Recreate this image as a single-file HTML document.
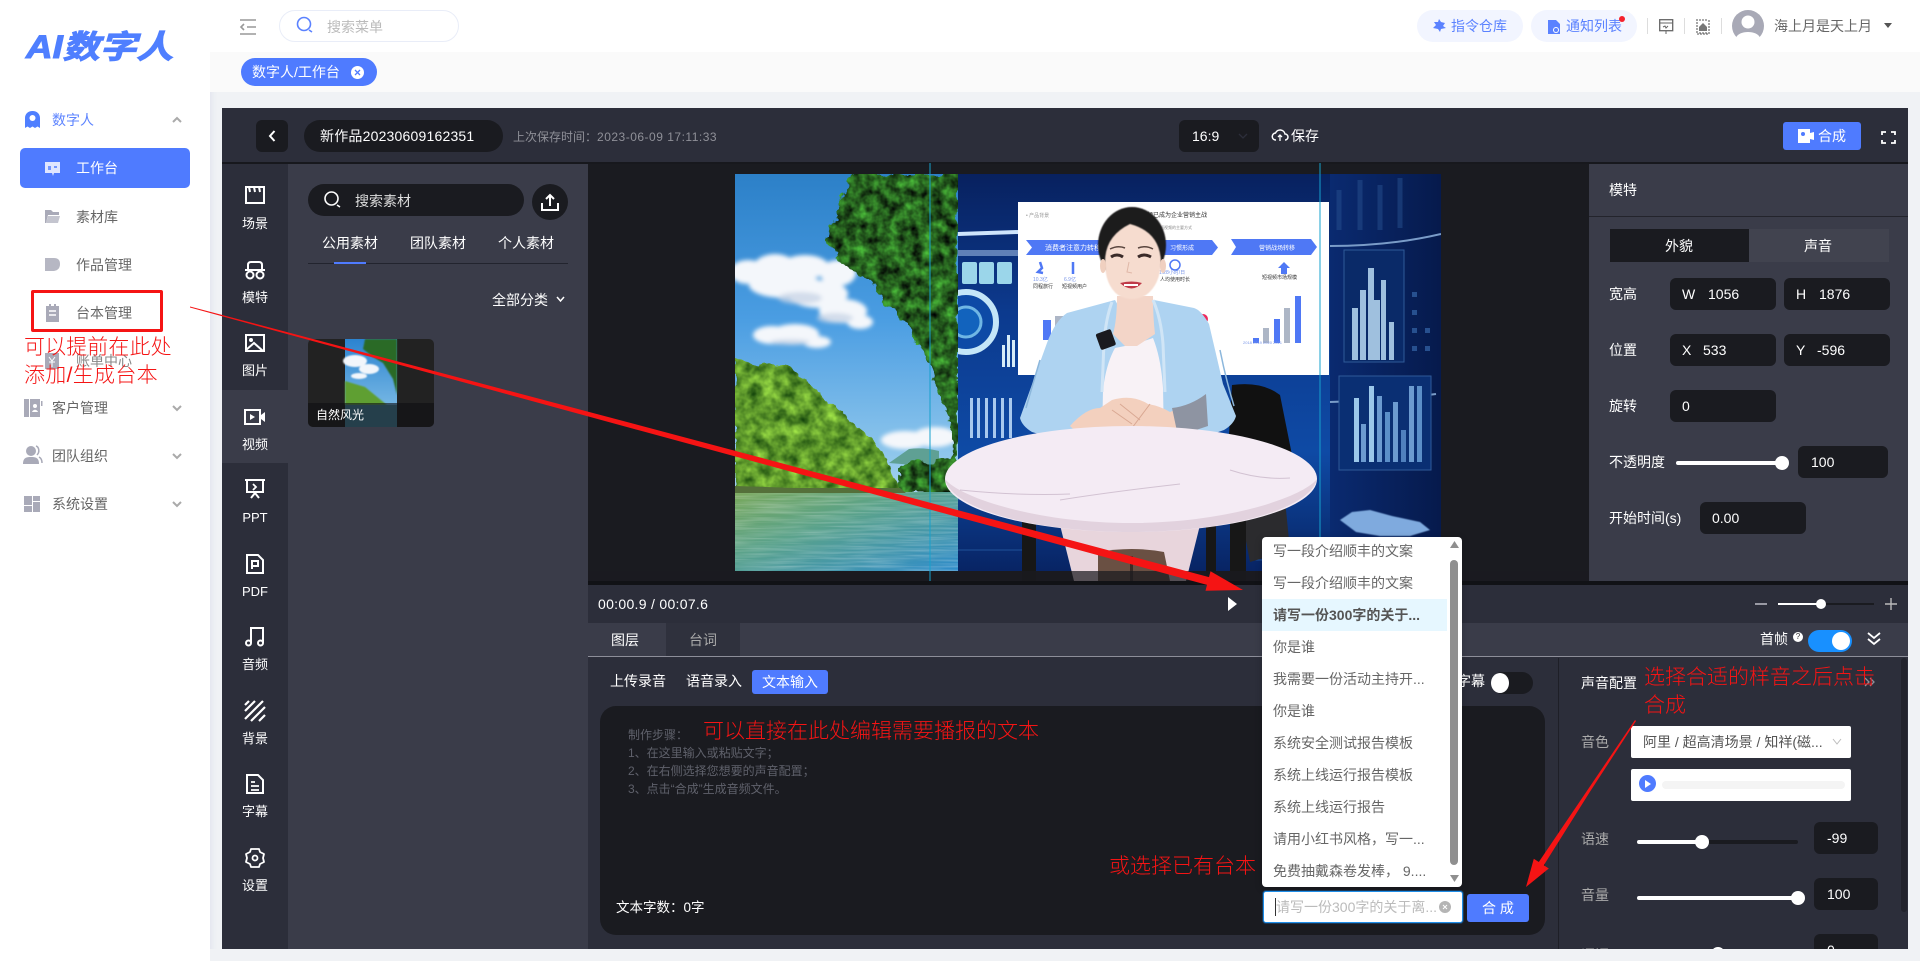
<!DOCTYPE html>
<html lang="zh"><head><meta charset="utf-8"><title>AI数字人</title>
<style>
html,body{margin:0;padding:0}
body{width:1920px;height:961px;overflow:hidden;position:relative;background:#f0f2f5;font-family:"Liberation Sans","Noto Sans CJK SC",sans-serif;font-size:14px;color:#fff}
.t{position:absolute;white-space:nowrap;line-height:20px}
.b{position:absolute;box-sizing:border-box}
.k{background:#1a1b20;border-radius:6px}
svg{position:absolute;overflow:visible}
.g{color:#666}
.r{position:absolute;white-space:nowrap;color:#f51414;font-size:21px;line-height:30px;font-weight:300;font-family:"Liberation Sans","Noto Sans CJK SC",sans-serif}
.l{width:66px;text-align:center;left:222px;font-size:13px}
.dd{left:1273px;color:#666}
.knob{position:absolute;background:#fff;border-radius:50%}
</style></head><body>

<!-- sidebar -->
<div class="b" style="left:0;top:0;width:210px;height:961px;background:#fff;box-shadow:2px 0 6px rgba(60,80,160,.08)"></div>
<div class="t" style="left:26px;top:27px;line-height:40px;font-size:32px;font-weight:700;font-style:italic;color:#4f7fff;-webkit-text-stroke:1px #4f7fff;transform:scaleX(1.15);transform-origin:0 50%">AI数字人</div>

<svg style="left:24px;top:110px" width="17" height="20" viewBox="0 0 17 20"><path d="M8.5 1C4 1 1 4 1 8v10l2.5-1.5L6 18l2.5-1.5L11 18l2.5-1.5L16 18V8c0-4-3-7-7.5-7z" fill="#4f7fff"/><circle cx="8.5" cy="8" r="3" fill="#fff"/></svg>
<div class="t" style="left:52px;top:110px;color:#5d84ff">数字人</div>
<svg style="left:172px;top:116px" width="10" height="8"><path d="M1 6l4-4 4 4" fill="none" stroke="#aaa" stroke-width="2"/></svg>

<div class="b" style="left:20px;top:148px;width:170px;height:40px;background:#4f7bff;border-radius:5px"></div>
<svg style="left:45px;top:161px" width="15" height="15"><path d="M0 1h15v11H9l-1 3-1-3H0z" fill="#dfe6ff"/><path d="M3 6h3M9 6h3M3 8h3" stroke="#4f7bff" stroke-width="1.5"/></svg>
<div class="t" style="left:76px;top:158px">工作台</div>

<svg style="left:45px;top:209px" width="15" height="15"><path d="M0 1h6l2 2h6v3H3L1 14H0z" fill="#a9aab8"/><path d="M3 7h12l-2 7H1z" fill="#c4c5cf"/></svg>
<div class="t g" style="left:76px;top:207px">素材库</div>
<svg style="left:45px;top:257px" width="15" height="15"><path d="M0 1h9q6 0 6 6t-6 7H0z" fill="#b6b7c3"/></svg>
<div class="t g" style="left:76px;top:255px">作品管理</div>
<svg style="left:46px;top:304px" width="13" height="18"><path d="M0 2h3V0h2v2h3V0h2v2h3v16H0z" fill="#a9aab8"/><path d="M3 7h7M3 11h7" stroke="#fff" stroke-width="1.5"/></svg>
<div class="t g" style="left:76px;top:303px">台本管理</div>
<svg style="left:45px;top:353px" width="14" height="16"><rect width="14" height="16" fill="#a9aab8"/><path d="M4 4l3 4 3-4M4 9h6M7 8v6" stroke="#fff" fill="none"/></svg>
<div class="t" style="left:76px;top:351px;color:#888">账单中心</div>

<svg style="left:24px;top:399px" width="18" height="18"><rect x="0" y="0" width="5" height="18" fill="#a9aab8"/><rect x="6" y="0" width="10" height="18" fill="#a9aab8"/><rect x="17" y="2" width="1.5" height="5" fill="#a9aab8"/><circle cx="11" cy="7" r="2" fill="#fff"/><path d="M8 13c1-3 5-3 6 0z" fill="#fff"/></svg>
<div class="t g" style="left:52px;top:398px">客户管理</div>
<svg style="left:172px;top:404px" width="10" height="8"><path d="M1 2l4 4 4-4" fill="none" stroke="#aaa" stroke-width="2"/></svg>

<svg style="left:23px;top:446px" width="19" height="18"><circle cx="8" cy="5" r="5" fill="#a9aab8"/><path d="M0 18c0-6 3-7 8-7s8 1 8 7z" fill="#a9aab8"/><path d="M13 0c3 1 4 6 1 9M16 11c2 1 3 3 3 6" stroke="#a9aab8" fill="none" stroke-width="1.5"/></svg>
<div class="t g" style="left:52px;top:446px">团队组织</div>
<svg style="left:172px;top:452px" width="10" height="8"><path d="M1 2l4 4 4-4" fill="none" stroke="#aaa" stroke-width="2"/></svg>

<svg style="left:24px;top:496px" width="16" height="16"><rect width="8" height="9" fill="#a9aab8"/><rect x="9" width="7" height="5" fill="#a9aab8"/><rect y="10" width="8" height="6" fill="#a9aab8"/><rect x="9" y="6" width="7" height="10" fill="#a9aab8"/></svg>
<div class="t g" style="left:52px;top:494px">系统设置</div>
<svg style="left:172px;top:500px" width="10" height="8"><path d="M1 2l4 4 4-4" fill="none" stroke="#aaa" stroke-width="2"/></svg>

<!-- top bar -->
<div class="b" style="left:210px;top:0;width:1710px;height:52px;background:#fff"></div>
<div class="b" style="left:210px;top:52px;width:1710px;height:40px;background:#fafafa"></div>
<svg style="left:240px;top:19px" width="16" height="16"><path d="M0 1h16M7 8h9M0 15h16M4 5L1 8l3 3" fill="none" stroke="#999" stroke-width="1.6"/></svg>
<div class="b" style="left:279px;top:10px;width:180px;height:32px;border:1px solid #e9edf8;border-radius:16px"></div>
<svg style="left:296px;top:16px" width="18" height="18"><circle cx="8" cy="8" r="6.500" fill="none" stroke="#5b82ff" stroke-width="1.6"/><path d="M13 14l3 2" stroke="#5b82ff" stroke-width="1.6"/></svg>
<div class="t" style="left:327px;top:17px;color:#bbb">搜索菜单</div>

<div class="b" style="left:241px;top:58px;width:136px;height:28px;background:#4f7bff;border-radius:14px"></div>
<div class="t" style="left:252px;top:62px">数字人/工作台</div>
<div class="b" style="left:351px;top:66px;width:13px;height:13px;border-radius:50%;background:#fff"></div>
<svg style="left:354px;top:69px" width="7" height="7"><path d="M1 1l5 5M6 1L1 6" stroke="#4f7bff" stroke-width="1.3"/></svg>

<div class="b" style="left:1417px;top:10px;width:106px;height:32px;background:#f2f5ff;border-radius:16px"></div>
<svg style="left:1433px;top:19px" width="13" height="14"><path d="M6 0l2 3 4 1-2 3 3 2-5 1-1 3-2-3-5-1 3-3-2-3 4 0z" fill="#5b82ff"/></svg>
<div class="t" style="left:1451px;top:16px;color:#5b82ff">指令仓库</div>
<div class="b" style="left:1531px;top:10px;width:106px;height:32px;background:#f2f5ff;border-radius:16px"></div>
<svg style="left:1548px;top:20px" width="13" height="14"><path d="M0 0h8l4 4v10H0z" fill="#5b82ff"/><circle cx="8" cy="10" r="3" fill="#fff"/><circle cx="8" cy="10" r="2" fill="#5b82ff"/></svg>
<div class="t" style="left:1566px;top:16px;color:#5b82ff">通知列表</div>
<div class="b" style="left:1619px;top:16px;width:6px;height:6px;border-radius:50%;background:#f5222d"></div>
<div class="b" style="left:1647px;top:18px;width:1px;height:16px;background:#ddd"></div>
<div class="b" style="left:1684px;top:18px;width:1px;height:16px;background:#ddd"></div>
<div class="b" style="left:1721px;top:18px;width:1px;height:16px;background:#ddd"></div>
<svg style="left:1659px;top:19px" width="15" height="15"><rect x=".7" y=".7" width="13" height="11" fill="none" stroke="#666" stroke-width="1.3"/><path d="M1 4h13M4 8l2-1 1 2 2-2M7 12v3" fill="none" stroke="#666"/></svg>
<svg style="left:1696px;top:19px" width="14" height="15"><path d="M1 0v15h12V0" fill="none" stroke="#777" stroke-width="1.3" stroke-dasharray="2 1"/><path d="M3 1h8M3 14h8" stroke="#777" stroke-width="1.3" stroke-dasharray="2 1"/><path d="M7 4l4 4v4H3V8z" fill="#777"/></svg>
<svg style="left:1732px;top:10px" width="32" height="32"><circle cx="16" cy="16" r="16" fill="#a8a9b6"/><circle cx="16" cy="12" r="6.500" fill="#fff"/><path d="M4 28c2-8 22-8 24 0a16 16 0 0 1-24 0z" fill="#fff"/></svg>
<div class="t" style="left:1774px;top:16px;color:#666">海上月是天上月</div>
<svg style="left:1884px;top:23px" width="8" height="6"><path d="M0 0h8L4 5z" fill="#555"/></svg>

<!-- editor -->
<div class="b" style="left:222px;top:108px;width:1686px;height:841px;background:#2c2e3a;overflow:hidden"></div>
<div class="b" style="left:222px;top:162px;width:1686px;height:2px;background:#17181d"></div>
<div class="b k" style="left:256px;top:120px;width:32px;height:32px"></div>
<svg style="left:268px;top:130px" width="8" height="12"><path d="M6.500 1L2 6l4.500 5" fill="none" stroke="#fff" stroke-width="2"/></svg>
<div class="b" style="left:304px;top:120px;width:199px;height:32px;background:#1a1b20;border-radius:16px"></div>
<div class="t" style="left:320px;top:126px;letter-spacing:.2px">新作品20230609162351</div>
<div class="t" style="left:513px;top:127px;font-size:12px;color:#8f9098">上次保存时间：<span style="letter-spacing:.5px">2023-06-09 17:11:33</span></div>
<div class="b k" style="left:1179px;top:120px;width:80px;height:32px"></div>
<div class="t" style="left:1192px;top:126px">16:9</div>
<svg style="left:1238px;top:133px" width="10" height="7"><path d="M1 1l4 4 4-4" fill="none" stroke="#2c2e3a" stroke-width="1.300"/></svg>
<svg style="left:1272px;top:128px" width="16" height="14"><path d="M4 12a3.500 3.500 0 0 1-.5-7A5 5 0 0 1 13 6a3 3 0 0 1 0 6" fill="none" stroke="#fff" stroke-width="1.500"/><path d="M8 13V7M6 9l2-2 2 2" fill="none" stroke="#fff" stroke-width="1.300"/></svg>
<div class="t" style="left:1291px;top:126px">保存</div>
<div class="b" style="left:1783px;top:122px;width:78px;height:28px;background:#4f7bff;border-radius:3px"></div>
<svg style="left:1798px;top:129px" width="16" height="14"><path d="M0 0h12v4l4-1v8l-4-1v4H0z" fill="#fff"/><circle cx="5" cy="5" r="2" fill="#4f7bff"/></svg>
<div class="t" style="left:1818px;top:126px">合成</div>
<svg style="left:1881px;top:131px" width="15" height="13"><path d="M1 4V1h4M10 1h4v3M14 9v3h-4M5 12H1V9" fill="none" stroke="#fff" stroke-width="1.800"/></svg>

<!-- left rail -->
<div class="b" style="left:222px;top:390px;width:66px;height:73px;background:#3a3c49"></div>
<div class="b" style="left:288px;top:164px;width:300px;height:785px;background:#3a3c49"></div>
<svg style="left:245px;top:186px" width="20" height="18"><path d="M1 1h18v16H1z" fill="none" stroke="#fff" stroke-width="2"/><path d="M4 1l1 5M9 1l1 5M14 1l1 5" stroke="#fff" stroke-width="2"/></svg>
<div class="t l" style="top:214px">场景</div>
<svg style="left:245px;top:261px" width="20" height="19"><path d="M3 8V4q0-3 3-3h8q3 0 3 3v4M0 9h20" fill="none" stroke="#fff" stroke-width="2"/><circle cx="5" cy="14" r="3.500" fill="none" stroke="#fff" stroke-width="2"/><circle cx="15" cy="14" r="3.500" fill="none" stroke="#fff" stroke-width="2"/></svg>
<div class="t l" style="top:288px">模特</div>
<svg style="left:245px;top:334px" width="20" height="18"><rect x="1" y="1" width="18" height="16" fill="none" stroke="#fff" stroke-width="2"/><circle cx="6" cy="6" r="2" fill="#fff"/><path d="M1 16l8-7 9 8" fill="none" stroke="#fff" stroke-width="2"/></svg>
<div class="t l" style="top:361px">图片</div>
<svg style="left:244px;top:409px" width="22" height="16"><rect x="1" y="1" width="15" height="14" fill="none" stroke="#fff" stroke-width="2"/><path d="M6 5l5 3-5 3z" fill="#fff"/><path d="M17 6l4-3v10l-4-3z" fill="#fff"/></svg>
<div class="t l" style="top:435px">视频</div>
<svg style="left:245px;top:479px" width="20" height="20"><path d="M0 1h20M2 1v12h16V1" fill="none" stroke="#fff" stroke-width="2"/><path d="M8 5l3 3-3 3" fill="none" stroke="#fff" stroke-width="1.800"/><path d="M6 19l4-5 4 5" fill="none" stroke="#fff" stroke-width="2"/></svg>
<div class="t l" style="top:508px">PPT</div>
<svg style="left:246px;top:554px" width="18" height="20"><path d="M1 1h11l5 5v13H1z" fill="none" stroke="#fff" stroke-width="2"/><path d="M6 15V7h6v5H6" fill="none" stroke="#fff" stroke-width="2"/></svg>
<div class="t l" style="top:582px">PDF</div>
<svg style="left:245px;top:627px" width="20" height="20"><path d="M6 16V1h12v15" fill="none" stroke="#fff" stroke-width="2"/><circle cx="3.500" cy="16" r="2.500" fill="none" stroke="#fff" stroke-width="2"/><circle cx="15.500" cy="16" r="2.500" fill="none" stroke="#fff" stroke-width="2"/></svg>
<div class="t l" style="top:655px">音频</div>
<svg style="left:245px;top:701px" width="20" height="20"><path d="M0 10L10 0M0 18L18 0M6 20L20 6M14 20l6-6M0 4l4-4" stroke="#fff" stroke-width="2.200"/></svg>
<div class="t l" style="top:729px">背景</div>
<svg style="left:246px;top:774px" width="18" height="20"><path d="M1 1h11l5 5v13H1z" fill="none" stroke="#fff" stroke-width="2"/><path d="M5 8h4M5 12h8M5 16h8" stroke="#fff" stroke-width="1.800"/></svg>
<div class="t l" style="top:802px">字幕</div>
<svg style="left:245px;top:848px" width="20" height="20"><path d="M6 1h8l1 3 4 2-1 4 1 4-4 2-1 3H6l-1-3-4-2 1-4-1-4 4-2z" fill="none" stroke="#fff" stroke-width="1.800" stroke-linejoin="round"/><circle cx="10" cy="10" r="2.500" fill="none" stroke="#fff" stroke-width="1.800"/></svg>
<div class="t l" style="top:876px">设置</div>

<!-- material panel -->
<div class="b" style="left:308px;top:184px;width:216px;height:32px;background:#1a1b20;border-radius:16px"></div>
<svg style="left:324px;top:191px" width="18" height="18"><circle cx="7.500" cy="7.500" r="6.500" fill="none" stroke="#fff" stroke-width="1.600"/><path d="M13 14l3 2" stroke="#fff" stroke-width="1.600"/></svg>
<div class="t" style="left:355px;top:191px;color:#ddd">搜索素材</div>
<div class="b" style="left:532px;top:184px;width:36px;height:36px;background:#1a1b20;border-radius:50%"></div>
<svg style="left:541px;top:193px" width="18" height="18"><path d="M1 10v7h16v-7M9 13V2M5 6l4-4 4 4" fill="none" stroke="#fff" stroke-width="2"/></svg>
<div class="t" style="left:322px;top:233px">公用素材</div>
<div class="t" style="left:410px;top:233px">团队素材</div>
<div class="t" style="left:498px;top:233px">个人素材</div>
<div class="b" style="left:308px;top:263px;width:260px;height:1px;background:#22242e"></div>
<div class="b" style="left:334px;top:262px;width:32px;height:2px;background:#4f7bff"></div>
<div class="t" style="left:492px;top:290px">全部分类</div>
<svg style="left:557px;top:297px" width="7" height="5"><path d="M0 0l3.500 4L7 0" fill="none" stroke="#fff" stroke-width="1.500"/></svg>
<div class="b" style="left:308px;top:339px;width:126px;height:88px;background:#222;border-radius:5px;overflow:hidden">
<svg style="left:37px;top:0" width="52" height="88" viewBox="0 0 52 88"><defs><linearGradient id="ts" x1="0" y1="0" x2="0" y2="1"><stop offset="0" stop-color="#2b83d0"/><stop offset="1" stop-color="#8dc7ea"/></linearGradient><filter id="tb"><feGaussianBlur stdDeviation=".8"/></filter></defs><rect width="52" height="88" fill="url(#ts)"/><g filter="url(#tb)"><ellipse cx="10" cy="22" rx="12" ry="6" fill="#f2f6fb"/><ellipse cx="24" cy="30" rx="10" ry="5" fill="#f2f6fb"/><ellipse cx="14" cy="37" rx="8" ry="3" fill="#f2f6fb"/><path d="M20 0h32v56l-4-16-10-16-10-6-10-8z" fill="#2a6a26"/><path d="M0 42l20 6 22 18H0z" fill="#5f9f30"/></g><rect y="66" width="52" height="22" fill="#4a8fa8"/></svg>
<div class="b" style="left:0;top:64px;width:126px;height:24px;background:rgba(15,15,18,.62)"></div>
<div class="t" style="left:8px;top:66px;font-size:12px">自然风光</div>
</div>

<!-- canvas -->
<div class="b" style="left:588px;top:164px;width:1001px;height:417px;background:#1a1b20"></div>
<svg style="left:588px;top:163px" width="1001" height="418" viewBox="588 163 1001 418">
<defs>
<linearGradient id="sky" x1="0" y1="0" x2="0" y2="1"><stop offset="0" stop-color="#2c80c8"/><stop offset=".45" stop-color="#4a9de2"/><stop offset="1" stop-color="#a2d2ef"/></linearGradient>
<linearGradient id="wat" x1="0" y1="0" x2="1" y2="1"><stop offset="0" stop-color="#79a85a"/><stop offset=".4" stop-color="#5aa28a"/><stop offset="1" stop-color="#2f8ccb"/></linearGradient>
<linearGradient id="bg" x1="0" y1="0" x2="0" y2="1"><stop offset="0" stop-color="#08215f"/><stop offset=".35" stop-color="#0c3a8e"/><stop offset=".7" stop-color="#0e4aa5"/><stop offset="1" stop-color="#082464"/></linearGradient>
<linearGradient id="rbg" x1="0" y1="0" x2="1" y2="0"><stop offset="0" stop-color="#0a2a70"/><stop offset="1" stop-color="#061a4c"/></linearGradient>
<filter id="hill" x="0" y="0" width="100%" height="100%" color-interpolation-filters="sRGB"><feTurbulence type="fractalNoise" baseFrequency=".08" numOctaves="3" seed="7" result="n"/><feDisplacementMap in="SourceGraphic" in2="n" scale="10" xChannelSelector="R" yChannelSelector="G" result="d"/><feColorMatrix in="n" values=".7 0 0 0 .02  .8 0 0 0 .2  .3 0 0 0 .02  0 0 0 0 1"/><feComposite in2="d" operator="in"/></filter>
<filter id="tree" x="0" y="0" width="100%" height="100%" color-interpolation-filters="sRGB"><feTurbulence type="fractalNoise" baseFrequency=".09" numOctaves="3" seed="3" result="n"/><feDisplacementMap in="SourceGraphic" in2="n" scale="14" xChannelSelector="R" yChannelSelector="G" result="d"/><feColorMatrix in="n" values=".4 0 0 0 -.05  1 0 0 0 -.12  .3 0 0 0 -.03  0 0 0 0 1"/><feComposite in2="d" operator="in"/></filter>
<filter id="rip" x="0" y="0" width="100%" height="100%" color-interpolation-filters="sRGB"><feTurbulence type="fractalNoise" baseFrequency=".02 .5" numOctaves="2" seed="5"/><feColorMatrix values="0 0 0 0 1  0 0 0 0 1  0 0 0 0 1  .5 0 0 0 -.17"/><feComposite in2="SourceGraphic" operator="in"/></filter>
<filter id="bl"><feGaussianBlur stdDeviation="2"/></filter>
<filter id="bl1"><feGaussianBlur stdDeviation=".6"/></filter>
<clipPath id="cp1"><rect x="735" y="174" width="223" height="397"/></clipPath>
<clipPath id="cp2"><rect x="958" y="174" width="483" height="397"/></clipPath>
<clipPath id="cp3"><rect x="1018" y="202" width="311" height="173"/></clipPath>
</defs>
<!-- nature -->
<g clip-path="url(#cp1)">
<rect x="735" y="174" width="223" height="320" fill="url(#sky)"/>
<g filter="url(#bl)">
<g fill="#f4f7fb">
<ellipse cx="748" cy="272" rx="18" ry="12"/><ellipse cx="775" cy="268" rx="22" ry="14"/><ellipse cx="805" cy="267" rx="24" ry="12"/><ellipse cx="838" cy="273" rx="18" ry="13"/>
<ellipse cx="785" cy="285" rx="36" ry="13"/><ellipse cx="818" cy="294" rx="30" ry="14"/><ellipse cx="843" cy="311" rx="24" ry="12"/><ellipse cx="860" cy="322" rx="13" ry="7"/>
<ellipse cx="772" cy="335" rx="19" ry="9"/><ellipse cx="795" cy="334" rx="24" ry="10"/><ellipse cx="817" cy="342" rx="14" ry="6"/>
<ellipse cx="905" cy="440" rx="24" ry="9"/><ellipse cx="935" cy="437" rx="22" ry="10"/>
</g>
<g fill="#c9d5e6" opacity=".75"><ellipse cx="800" cy="298" rx="22" ry="6"/><ellipse cx="835" cy="318" rx="18" ry="5"/><ellipse cx="790" cy="342" rx="20" ry="3"/></g>
</g>
<path d="M889 463l20-14q14-2 30 2v16z" fill="#5fa094"/>
<path d="M735 357l10 4 12 6q8-8 20 0 12-4 24 12 12 6 24 22 12 6 26 20 12 10 20 16 12 14 20 34 6 10 10 21v3H735z" fill="#000" filter="url(#hill)"/>
<path d="M898 468q16-8 32-6l28-4v36H900z" fill="#000" filter="url(#tree)"/>
<path d="M852 174h106v330l-8-24q2-20 2-48-6-24-17-50l-10-30-20-30-20-22-15-18-20-12-25-30q8-16 13-30z" fill="#000" filter="url(#tree)"/>
<rect x="735" y="492" width="223" height="79" fill="url(#wat)"/>
<rect x="735" y="492" width="223" height="79" fill="#000" filter="url(#rip)"/>
<path d="M735 486l60 2h105l6 5H735z" fill="#55703a"/>
</g>
<!-- scene -->
<g clip-path="url(#cp2)">
<rect x="958" y="174" width="483" height="397" fill="url(#bg)"/>
<rect x="1330" y="174" width="111" height="397" fill="url(#rbg)"/>
<path d="M958 232l60-2v4l-60 2z" fill="#cfe5fb"/>
<path d="M958 256h60v-6h-60z" fill="#9ab8e0" opacity=".6"/>
<g fill="#9bd6ea"><rect x="962" y="262" width="15" height="22" rx="2"/><rect x="979" y="262" width="15" height="22" rx="2"/><rect x="997" y="262" width="15" height="22" rx="2"/></g>
<circle cx="966" cy="322" r="30" fill="#0d4aa6" stroke="#c4e6f8" stroke-width="6"/>
<circle cx="966" cy="322" r="15" fill="#1263bd" stroke="#6fb6e4" stroke-width="3"/>
<g fill="#d7ecf8"><rect x="1002" y="345" width="3" height="22"/><rect x="1007" y="335" width="3" height="32"/><rect x="1012" y="340" width="3" height="27"/></g>
<g fill="#a8c9ee"><rect x="970" y="398" width="3" height="40"/><rect x="977" y="398" width="3" height="40"/><rect x="985" y="398" width="3" height="40"/><rect x="993" y="398" width="3" height="40"/><rect x="1001" y="398" width="3" height="40"/><rect x="1009" y="398" width="3" height="40"/></g>
<path d="M1330 402q60-2 106-8M1330 246q60 0 111-12" stroke="#7a9cc8" stroke-width="2" fill="none"/>
<!-- right charts -->
<rect x="1344" y="250" width="60" height="112" fill="#0a2a68" stroke="#2f5a98"/>
<g fill="#9fc0de">
<rect x="1352" y="308" width="6" height="52"/><rect x="1360" y="290" width="6" height="70"/><rect x="1368" y="268" width="6" height="92"/><rect x="1374" y="300" width="6" height="60"/><rect x="1381" y="280" width="5" height="80"/><rect x="1389" y="322" width="5" height="38"/></g>
<g fill="#27508f"><rect x="1412" y="292" width="5" height="5"/><rect x="1412" y="310" width="5" height="5"/><rect x="1412" y="328" width="5" height="5"/><rect x="1412" y="346" width="5" height="5"/><rect x="1425" y="328" width="5" height="5"/><rect x="1425" y="346" width="5" height="5"/></g>
<rect x="1339" y="376" width="92" height="94" fill="#0a2f73" stroke="#2f5a98"/>
<g>
<rect x="1354" y="398" width="5" height="64" fill="#9cc8ea"/><rect x="1361" y="424" width="5" height="38" fill="#6c9bd0"/><rect x="1369" y="386" width="5" height="76" fill="#9cc8ea"/><rect x="1377" y="396" width="5" height="66" fill="#6c9bd0"/><rect x="1385" y="412" width="5" height="50" fill="#5b8fc8"/><rect x="1393" y="402" width="5" height="60" fill="#6c9bd0"/><rect x="1401" y="430" width="5" height="32" fill="#5080bd"/><rect x="1409" y="386" width="5" height="76" fill="#6c9bd0"/><rect x="1417" y="386" width="5" height="76" fill="#5b8fc8"/></g>
<path d="M1339 190v40M1360 180v50M1380 185v45M1400 178v50" stroke="#27508f" stroke-width="5" opacity=".5"/>
<path d="M1340 520l12-8 18-2 22 6 28 6 10 8-20 6-30 0-24-4z" fill="#7faade" filter="url(#bl1)"/>
<g stroke="#2e6ab4" fill="none" opacity=".6"><path d="M958 500q30-20 60-10M958 550h70M1250 560h190"/></g>
</g>
<!-- slide -->
<rect x="1018" y="202" width="311" height="173" fill="#fff"/>
<g clip-path="url(#cp3)">
<g fill="#4f78f5">
<path d="M1026 240h100v15h-100l6-7.500z"/><path d="M1150 240h62l6 7.500-6 7.500h-62z"/><path d="M1231 239h80l6 8-6 8h-80l5-8z"/>
<rect x="1043" y="320" width="8" height="20"/><rect x="1253" y="338" width="6" height="5"/><rect x="1274" y="319" width="6" height="24"/><rect x="1295" y="296" width="6" height="47"/></g>
<g fill="#adb6c6"><rect x="1055" y="316" width="8" height="24"/><rect x="1263" y="328" width="6" height="15"/><rect x="1284" y="308" width="6" height="35"/></g>
<text x="1045" y="250" font-size="7" fill="#fff">消费者注意力转移</text>
<text x="1170" y="250" font-size="6" fill="#fff">习惯形成</text>
<text x="1147" y="217" font-size="6" fill="#333">频已成为企业营销主战</text>
<text x="1160" y="229" font-size="4" fill="#888">短视频的主要方式</text>
<text x="1026" y="217" font-size="5" fill="#999">• 产品背景</text>
<text x="1259" y="250" font-size="6" fill="#fff">营销战场转移</text>
<path d="M1040 262l2 6-4 4 5 1M1073 262v12" stroke="#4f78f5" stroke-width="2.500" fill="none"/>
<circle cx="1175" cy="265" r="5" fill="none" stroke="#4f78f5" stroke-width="1.500"/>
<text x="1033" y="281" font-size="5" fill="#7a96e8">10.3亿</text><text x="1064" y="281" font-size="5" fill="#7a96e8">6.9亿</text>
<text x="1033" y="288" font-size="5" fill="#333">同程旅行</text><text x="1062" y="288" font-size="5" fill="#333">短视频用户</text>
<text x="1159" y="274" font-size="5" fill="#7a96e8">1.28小时/日</text><text x="1160" y="281" font-size="5" fill="#333">人均使用时长</text>
<text x="1262" y="279" font-size="5" fill="#333">短视频市场规模</text>
<text x="1243" y="344" font-size="4" fill="#7a96e8">2018 2019 2020 2021</text>
<circle cx="1203" cy="319" r="5" fill="#ee2a5c"/>
<path d="M1284 262l6 6h-3v6h-6v-6h-3z" fill="#4f78f5"/>
</g>
<!-- chair + legs -->
<path d="M1232 385q30-4 48 10l16 80-30 40-40-30z" fill="#111"/>
<path d="M1240 510q20-24 44-20l6 60-40 12z" fill="#2b2b2e"/>
<rect x="1022" y="510" width="14" height="71" fill="#171717"/>
<rect x="1206" y="510" width="10" height="71" fill="#171717"/>
<rect x="1230" y="510" width="16" height="71" fill="#171717"/>
<path d="M1060 525h140l-14 56h-112z" fill="#e8d5dc"/>
<path d="M1098 552q34-6 66 0l6 29h-72z" fill="#6a5043"/>
<path d="M1130 556h3v25h-3z" fill="#3b2c26"/>
<!-- body -->
<path d="M1115 300L1067 313q-12 8-20 30l-17 47-10 28q2 8 12 14l48 14h98l46-16q10-6 12-14l-13-32-14-60q-8-14-15-16l-40-8-22 30z" fill="#aed3f1"/>
<path d="M1040 360q-6 20-14 48M1220 350q6 30 14 56" stroke="#8cb7dc" stroke-width="1.500" fill="none"/>
<path d="M1102 440l1-50q3-26 12-42l20-4 18-6q8 20 10 50l1 52z" fill="#f8f2f6"/>
<path d="M1117 296q0 24-4 38l12 12h12l18-12q-2-16-2-38z" fill="#f3d5c8"/>
<path d="M1112 302q-6 16-8 40l-2 50M1153 300q8 18 10 44l2 48" stroke="#d0e5f6" stroke-width="3" fill="none"/>
<path d="M1070 426q16-18 30-18l12-8q20-6 36 4 12 2 22 8l14-6 1 26q-18 8-36 14-26 2-44-2-24-6-35-18z" fill="#f3d0be"/>
<path d="M1172 408q18-2 34-14l2 32-30 10z" fill="#8e94a2"/>
<path d="M1112 410l20 14M1120 404l20 16M1150 404l-18 24" stroke="#d9a893"/>
<rect x="1098" y="331" width="16" height="17" rx="2" fill="#1a1a1f" transform="rotate(-20 1106 340)"/>
<!-- head -->
<ellipse cx="1132" cy="245" rx="34" ry="38" fill="#1e1a1c" filter="url(#bl1)"/>
<path d="M1105 262Q1105 236 1130 224Q1160 232 1161 262Q1160 285 1146 295Q1132 303 1118 295Q1105 285 1105 262z" fill="#f6dccf" filter="url(#bl1)"/>
<ellipse cx="1103" cy="266" rx="3" ry="7" fill="#f0d0c0"/><ellipse cx="1163" cy="266" rx="3" ry="7" fill="#f0d0c0"/>
<path d="M1111 257q6-4 12 0M1138 257q6-4 13 0" stroke="#3a2a28" stroke-width="3" fill="none"/>
<path d="M1110 249q8-4 15-1M1138 248q8-3 15 1" stroke="#5a463f" stroke-width="1.500" fill="none"/>
<path d="M1129 262l-2 10 5 1" stroke="#e0b8a8" fill="none"/>
<path d="M1120 283q12-3 22 0-10 11-22 0z" fill="#c03a48"/>
<path d="M1124 284h14v2h-14z" fill="#fff"/>
<!-- table -->
<ellipse cx="1131" cy="479" rx="186" ry="53" fill="#f4ebf4"/>
<path d="M1131 532c-100 0-180-24-186-53 14 18 90 44 186 44s172-26 186-44c-6 29-86 53-186 53z" fill="#e2d2de"/>
<path d="M960 490q60 6 110 4M1060 500q50-8 120-16M1230 470q30 10 60 8" stroke="#d2c2d2" fill="none"/>
<!-- bottom fade -->
<rect x="588" y="571" width="1001" height="10" fill="rgba(26,27,32,.72)"/>
<!-- guides -->
<path d="M930 163v418M1320 163v418" stroke="#16a0cc" stroke-width="1"/>
</svg>

<!-- right panel -->
<div class="b" style="left:1589px;top:164px;width:319px;height:417px;background:#3a3c49"></div>
<div class="b" style="left:1589px;top:216px;width:319px;height:1px;background:#23242c"></div>
<div class="t" style="left:1609px;top:180px">模特</div>
<div class="b" style="left:1610px;top:229px;width:279px;height:33px;background:#41434f"></div>
<div class="b" style="left:1610px;top:229px;width:139px;height:33px;background:#1a1b20"></div>
<div class="t" style="left:1665px;top:236px">外貌</div>
<div class="t" style="left:1804px;top:236px">声音</div>
<div class="t" style="left:1609px;top:284px">宽高</div>
<div class="b k" style="left:1670px;top:278px;width:106px;height:32px"></div>
<div class="b k" style="left:1784px;top:278px;width:106px;height:32px"></div>
<div class="t" style="left:1682px;top:284px">W</div><div class="t" style="left:1708px;top:284px">1056</div>
<div class="t" style="left:1796px;top:284px">H</div><div class="t" style="left:1819px;top:284px">1876</div>
<div class="t" style="left:1609px;top:340px">位置</div>
<div class="b k" style="left:1670px;top:334px;width:106px;height:32px"></div>
<div class="b k" style="left:1784px;top:334px;width:106px;height:32px"></div>
<div class="t" style="left:1682px;top:340px">X</div><div class="t" style="left:1703px;top:340px">533</div>
<div class="t" style="left:1796px;top:340px">Y</div><div class="t" style="left:1817px;top:340px">-596</div>
<div class="t" style="left:1609px;top:396px">旋转</div>
<div class="b k" style="left:1670px;top:390px;width:106px;height:32px"></div>
<div class="t" style="left:1682px;top:396px">0</div>
<div class="t" style="left:1609px;top:452px">不透明度</div>
<div class="b" style="left:1676px;top:461px;width:106px;height:4px;background:#fff;border-radius:2px"></div>
<div class="knob" style="left:1775px;top:456px;width:14px;height:14px"></div>
<div class="b k" style="left:1798px;top:446px;width:90px;height:32px"></div>
<div class="t" style="left:1811px;top:452px">100</div>
<div class="t" style="left:1609px;top:508px">开始时间(s)</div>
<div class="b k" style="left:1700px;top:502px;width:106px;height:32px"></div>
<div class="t" style="left:1712px;top:508px">0.00</div>

<!-- timeline -->
<div class="b" style="left:588px;top:581px;width:1320px;height:4px;background:#111216"></div>
<div class="b" style="left:588px;top:585px;width:1320px;height:364px;background:#2c2e3a"></div>
<div class="t" style="left:598px;top:594px;letter-spacing:.3px">00:00.9 / 00:07.6</div>
<svg style="left:1227px;top:596px" width="11" height="16"><path d="M1 1l9 7-9 7z" fill="#fff"/></svg>
<div class="b" style="left:1755px;top:603px;width:12px;height:2px;background:#9a9aa4"></div>
<div class="b" style="left:1778px;top:603px;width:96px;height:2px;background:#1a1b20"></div>
<div class="b" style="left:1778px;top:603px;width:43px;height:2px;background:#fff"></div>
<div class="knob" style="left:1816px;top:599px;width:10px;height:10px"></div>
<svg style="left:1885px;top:598px" width="12" height="12"><path d="M6 0v12M0 6h12" stroke="#bbb" stroke-width="1.400"/></svg>

<!-- tab row -->
<div class="b" style="left:588px;top:623px;width:1320px;height:34px;background:#3a3c49;border-bottom:1px solid #8d8e99"></div>
<div class="b" style="left:666px;top:623px;width:74px;height:33px;background:#2f313d"></div>
<div class="t" style="left:611px;top:630px">图层</div>
<div class="t" style="left:689px;top:630px;color:#aaa">台词</div>
<div class="t" style="left:1760px;top:629px">首帧</div>
<div class="b" style="left:1793px;top:632px;width:10px;height:10px;border-radius:50%;background:#fff"></div>
<div class="t" style="left:1793px;top:627px;width:10px;text-align:center;font-size:8px;color:#333">?</div>
<div class="b" style="left:1808px;top:630px;width:44px;height:22px;border-radius:11px;background:#1890ff"></div>
<div class="knob" style="left:1832px;top:632px;width:18px;height:18px"></div>
<svg style="left:1867px;top:632px" width="14" height="14"><path d="M1 1l6 5 6-5M1 7l6 5 6-5" fill="none" stroke="#fff" stroke-width="1.800"/></svg>

<!-- voice tabs -->
<div class="t" style="left:610px;top:671px">上传录音</div>
<div class="t" style="left:686px;top:671px">语音录入</div>
<div class="b" style="left:752px;top:670px;width:76px;height:24px;background:#4f7bff;border-radius:3px"></div>
<div class="t" style="left:762px;top:672px">文本输入</div>

<div class="b" style="left:600px;top:706px;width:945px;height:229px;background:#1a1b20;border-radius:16px"></div>
<div class="t" style="left:628px;top:725px;font-size:12px;color:#5f616b">制作步骤：</div>
<div class="t" style="left:628px;top:743px;font-size:12px;color:#5f616b">1、在这里输入或粘贴文字；</div>
<div class="t" style="left:628px;top:761px;font-size:12px;color:#5f616b">2、在右侧选择您想要的声音配置；</div>
<div class="t" style="left:628px;top:779px;font-size:12px;color:#5f616b">3、点击“合成”生成音频文件。</div>
<div class="t" style="left:616px;top:898px;font-size:13.500px">文本字数：0字</div>

<div class="t" style="left:1457px;top:671px">字幕</div>
<div class="b" style="left:1491px;top:672px;width:42px;height:22px;border-radius:11px;background:#1a1b20"></div>
<div class="knob" style="left:1491px;top:673px;width:18px;height:20px"></div>

<!-- voice config -->
<div class="b" style="left:1558px;top:658px;width:1px;height:291px;background:#1e1f27"></div>
<div class="t" style="left:1581px;top:673px">声音配置</div>
<svg style="left:1864px;top:677px" width="11" height="10"><path d="M1 1l4 4-4 4M6 1l4 4-4 4" fill="none" stroke="#8f909a" stroke-width="1.300"/></svg>
<div class="b" style="left:1901px;top:658px;width:6px;height:254px;background:#22232c;border-radius:3px"></div>
<div class="t" style="left:1581px;top:732px;color:#aaa">音色</div>
<div class="b" style="left:1631px;top:726px;width:220px;height:32px;background:#fff;border-radius:2px"></div>
<div class="t" style="left:1643px;top:732px;color:#555">阿里 / 超高清场景 / 知祥(磁...</div>
<svg style="left:1832px;top:738px" width="10" height="8"><path d="M1 1l4 5 4-5" fill="none" stroke="#bbb"/></svg>
<div class="b" style="left:1631px;top:769px;width:220px;height:32px;background:#fff;border-radius:2px"></div>
<div class="b" style="left:1639px;top:775px;width:17px;height:17px;border-radius:50%;background:#4f7bff"></div>
<svg style="left:1645px;top:780px" width="6" height="8"><path d="M0 0l6 4-6 4z" fill="#fff"/></svg>
<div class="b" style="left:1662px;top:781px;width:183px;height:8px;border-radius:4px;background:#f4f4f4"></div>

<div class="t" style="left:1581px;top:829px;color:#aaa">语速</div>
<div class="b" style="left:1637px;top:840px;width:161px;height:4px;background:#1a1b20;border-radius:2px"></div>
<div class="b" style="left:1637px;top:840px;width:65px;height:4px;background:#fff;border-radius:2px"></div>
<div class="knob" style="left:1695px;top:835px;width:14px;height:14px"></div>
<div class="b k" style="left:1814px;top:822px;width:64px;height:32px"></div>
<div class="t" style="left:1827px;top:828px">-99</div>
<div class="t" style="left:1581px;top:885px;color:#aaa">音量</div>
<div class="b" style="left:1637px;top:896px;width:161px;height:4px;background:#fff;border-radius:2px"></div>
<div class="knob" style="left:1791px;top:891px;width:14px;height:14px"></div>
<div class="b k" style="left:1814px;top:878px;width:64px;height:32px"></div>
<div class="t" style="left:1827px;top:884px">100</div>
<div class="b" style="left:1558px;top:934px;width:350px;height:15px;overflow:hidden">
<div class="t" style="left:23px;top:11px;color:#aaa">语调</div>
<div class="knob" style="left:153px;top:13px;width:14px;height:14px"></div>
<div class="b k" style="left:256px;top:0;width:64px;height:32px"></div>
<div class="t" style="left:269px;top:6px">0</div>
</div>

<!-- bottom clip -->
<div class="b" style="left:210px;top:949px;width:1710px;height:12px;background:#f0f2f5"></div>
<div class="b" style="left:1908px;top:92px;width:12px;height:869px;background:#f0f2f5"></div>

<!-- red arrow 1 (under dropdown) -->
<svg style="left:0;top:0" width="1920" height="961" viewBox="0 0 1920 961">
<polygon points="190,306.500 640.600,425.600 1209,577.100 1210.500,571.300 1243,590 1205.500,590.700 1207,584.900 639.400,430.400 190,307.500" fill="#f51414"/>
</svg>

<!-- dropdown -->
<div class="b" style="left:1262px;top:537px;width:200px;height:350px;background:#fff;border-radius:4px;box-shadow:0 2px 8px rgba(0,0,0,.2)"></div>
<div class="b" style="left:1262px;top:599px;width:185px;height:32px;background:#e6f7ff"></div>
<div class="t dd" style="top:541px">写一段介绍顺丰的文案</div>
<div class="t dd" style="top:573px">写一段介绍顺丰的文案</div>
<div class="t dd" style="top:605px;font-weight:700;color:#555">请写一份300字的关于...</div>
<div class="t dd" style="top:637px">你是谁</div>
<div class="t dd" style="top:669px">我需要一份活动主持开...</div>
<div class="t dd" style="top:701px">你是谁</div>
<div class="t dd" style="top:733px">系统安全测试报告模板</div>
<div class="t dd" style="top:765px">系统上线运行报告模板</div>
<div class="t dd" style="top:797px">系统上线运行报告</div>
<div class="t dd" style="top:829px">请用小红书风格，写一...</div>
<div class="t dd" style="top:861px">免费抽戴森卷发棒， 9....</div>
<div class="b" style="left:1450px;top:560px;width:8px;height:305px;background:#8f8f8f;border-radius:4px"></div>
<svg style="left:1450px;top:541px" width="9" height="8"><path d="M4.500 0L9 7H0z" fill="#8f8f8f"/></svg>
<svg style="left:1450px;top:875px" width="9" height="8"><path d="M4.500 7L9 0H0z" fill="#8f8f8f"/></svg>

<div class="b" style="left:1263px;top:891px;width:200px;height:32px;background:#fff;border:1px solid #1f8ee8;border-radius:3px;box-shadow:0 0 0 1px rgba(24,144,255,.25)"></div>
<div class="b" style="left:1275px;top:898px;width:1px;height:18px;background:#333"></div>
<div class="t" style="left:1276px;top:897px;color:#bbb">请写一份300字的关于离...</div>
<div class="b" style="left:1439px;top:901px;width:12px;height:12px;border-radius:50%;background:#b5b5b5"></div>
<svg style="left:1442px;top:904px" width="6" height="6"><path d="M1 1l4 4M5 1L1 5" stroke="#fff"/></svg>
<div class="b" style="left:1467px;top:894px;width:62px;height:28px;background:#4f7bff;border-radius:3px"></div>
<div class="t" style="left:1467px;top:898px;width:62px;text-align:center">合 成</div>

<!-- annotations -->
<div class="b" style="left:31px;top:290px;width:132px;height:42px;border:3px solid #f51414;border-radius:2px"></div>
<div class="r" style="left:24px;top:333px;letter-spacing:.1px">可以提前在此处</div>
<div class="r" style="left:24px;top:361px;letter-spacing:.3px">添加/生成台本</div>
<div class="r" style="left:703px;top:717px">可以直接在此处编辑需要播报的文本</div>
<div class="r" style="left:1109px;top:852px">或选择已有台本</div>
<div class="r" style="left:1644px;top:663px">选择合适的样音之后点击</div>
<div class="r" style="left:1644px;top:691px">合成</div>
<svg style="left:0;top:0" width="1920" height="961" viewBox="0 0 1920 961">
<polygon points="1635,720 1636,721 1589.300,792.800 1543.800,865.200 1548.800,868.500 1526,887 1533.800,858.700 1538.800,862 1586.700,791.200" fill="#f51414"/>
</svg>
</body></html>
